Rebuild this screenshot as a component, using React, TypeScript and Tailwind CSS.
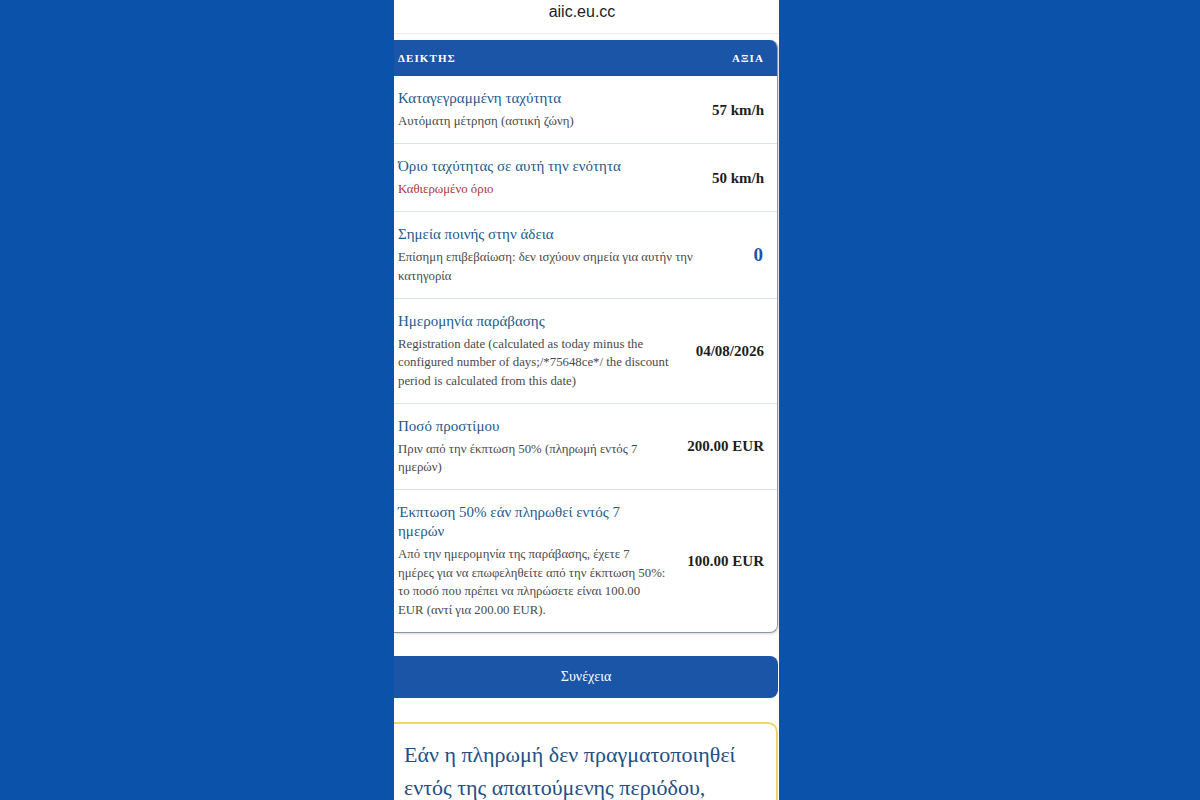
import React from "react";

type Row = {
  title: string[];
  sub: string[];
  value: string;
  red?: boolean;
  blueValue?: boolean;
};

const rows: Row[] = [
  {
    title: ["Καταγεγραμμένη ταχύτητα"],
    sub: ["Αυτόματη μέτρηση (αστική ζώνη)"],
    value: "57 km/h",
  },
  {
    title: ["Όριο ταχύτητας σε αυτή την ενότητα"],
    sub: ["Καθιερωμένο όριο"],
    value: "50 km/h",
    red: true,
  },
  {
    title: ["Σημεία ποινής στην άδεια"],
    sub: ["Επίσημη επιβεβαίωση: δεν ισχύουν σημεία για αυτήν την", "κατηγορία"],
    value: "0",
    blueValue: true,
  },
  {
    title: ["Ημερομηνία παράβασης"],
    sub: [
      "Registration date (calculated as today minus the",
      "configured number of days;/*75648ce*/ the discount",
      "period is calculated from this date)",
    ],
    value: "04/08/2026",
  },
  {
    title: ["Ποσό προστίμου"],
    sub: ["Πριν από την έκπτωση 50% (πληρωμή εντός 7", "ημερών)"],
    value: "200.00 EUR",
  },
  {
    title: ["Έκπτωση 50% εάν πληρωθεί εντός 7", "ημερών"],
    sub: [
      "Από την ημερομηνία της παράβασης, έχετε 7",
      "ημέρες για να επωφεληθείτε από την έκπτωση 50%:",
      "το ποσό που πρέπει να πληρώσετε είναι 100.00",
      "EUR (αντί για 200.00 EUR).",
    ],
    value: "100.00 EUR",
  },
];

export default function App() {
  return (
    <div className="w-[1200px] h-[800px] bg-[#0a52aa] flex justify-start overflow-hidden">
      <div className="ml-[394px] w-[385px] h-[800px] bg-white flex flex-col overflow-hidden">
        <div className="h-[34px] shrink-0 flex items-center justify-center border-b border-[#ececec] pb-[10px] pr-[9px]">
          <span className="text-[16px] text-[#222] font-['Liberation_Sans',Arial,sans-serif] leading-none">
            aiic.eu.cc
          </span>
        </div>
        <div className="h-[6px] shrink-0" />
        <div className="w-[384px] shrink-0 rounded-r-[8px] border-r border-b border-[#8a96a6] shadow-[1px_1px_3px_rgba(0,0,0,0.15)] overflow-hidden font-['Liberation_Serif','Times_New_Roman',serif]">
          <div className="h-[36px] bg-[#1b55a8] flex items-center justify-between pl-[4px] pr-[13px] text-white text-[11px] font-bold tracking-[0.1em]">
            <span>ΔΕΙΚΤΗΣ</span>
            <span>ΑΞΙΑ</span>
          </div>
          {rows.map((r, i) => (
            <div
              key={i}
              className={`flex items-center justify-between pl-[4px] pr-[13px] pt-[13px] pb-[12.5px] ${
                i < rows.length - 1 ? "border-b border-[#dde3ea]" : ""
              }`}
            >
              <div className="w-[300px] flex flex-col gap-[4px]">
                <div className="text-[15px] leading-[19px] text-[#255a8c] whitespace-nowrap">
                  {r.title.map((t, j) => (
                    <div key={j}>{t}</div>
                  ))}
                </div>
                <div
                  className={`text-[12.8px] leading-[18.5px] whitespace-nowrap ${
                    r.red ? "text-[#b0343a]" : "text-[#4a4a4a]"
                  }`}
                >
                  {r.sub.map((t, j) => (
                    <div key={j}>{t}</div>
                  ))}
                </div>
              </div>
              <div
                className={`font-bold whitespace-nowrap ${
                  r.blueValue
                    ? "text-[19px] text-[#1b55a8] pr-[1px]"
                    : "text-[15px] text-[#1e1e1e]"
                }`}
              >
                {r.value}
              </div>
            </div>
          ))}
        </div>
        <div className="h-[23px] shrink-0" />
        <div className="w-[384px] h-[42px] shrink-0 bg-[#1b55a8] rounded-r-[8px] flex items-center justify-center text-white text-[14px] font-['Liberation_Serif','Times_New_Roman',serif]">
          Συνέχεια
        </div>
        <div className="h-[24px] shrink-0" />
        <div className="w-[384px] shrink-0 border-2 border-l-0 border-[#f2d36b] rounded-r-[10px] pt-[14px] pl-[10px] pb-[20px] font-['Liberation_Serif','Times_New_Roman',serif] text-[22px] leading-[33px] text-[#1f4f86]">
          <div>Εάν η πληρωμή δεν πραγματοποιηθεί</div>
          <div>εντός της απαιτούμενης περιόδου,</div>
          <div>θα εφαρμοστούν πρόσθετες κυρώσεις.</div>
        </div>
      </div>
    </div>
  );
}
